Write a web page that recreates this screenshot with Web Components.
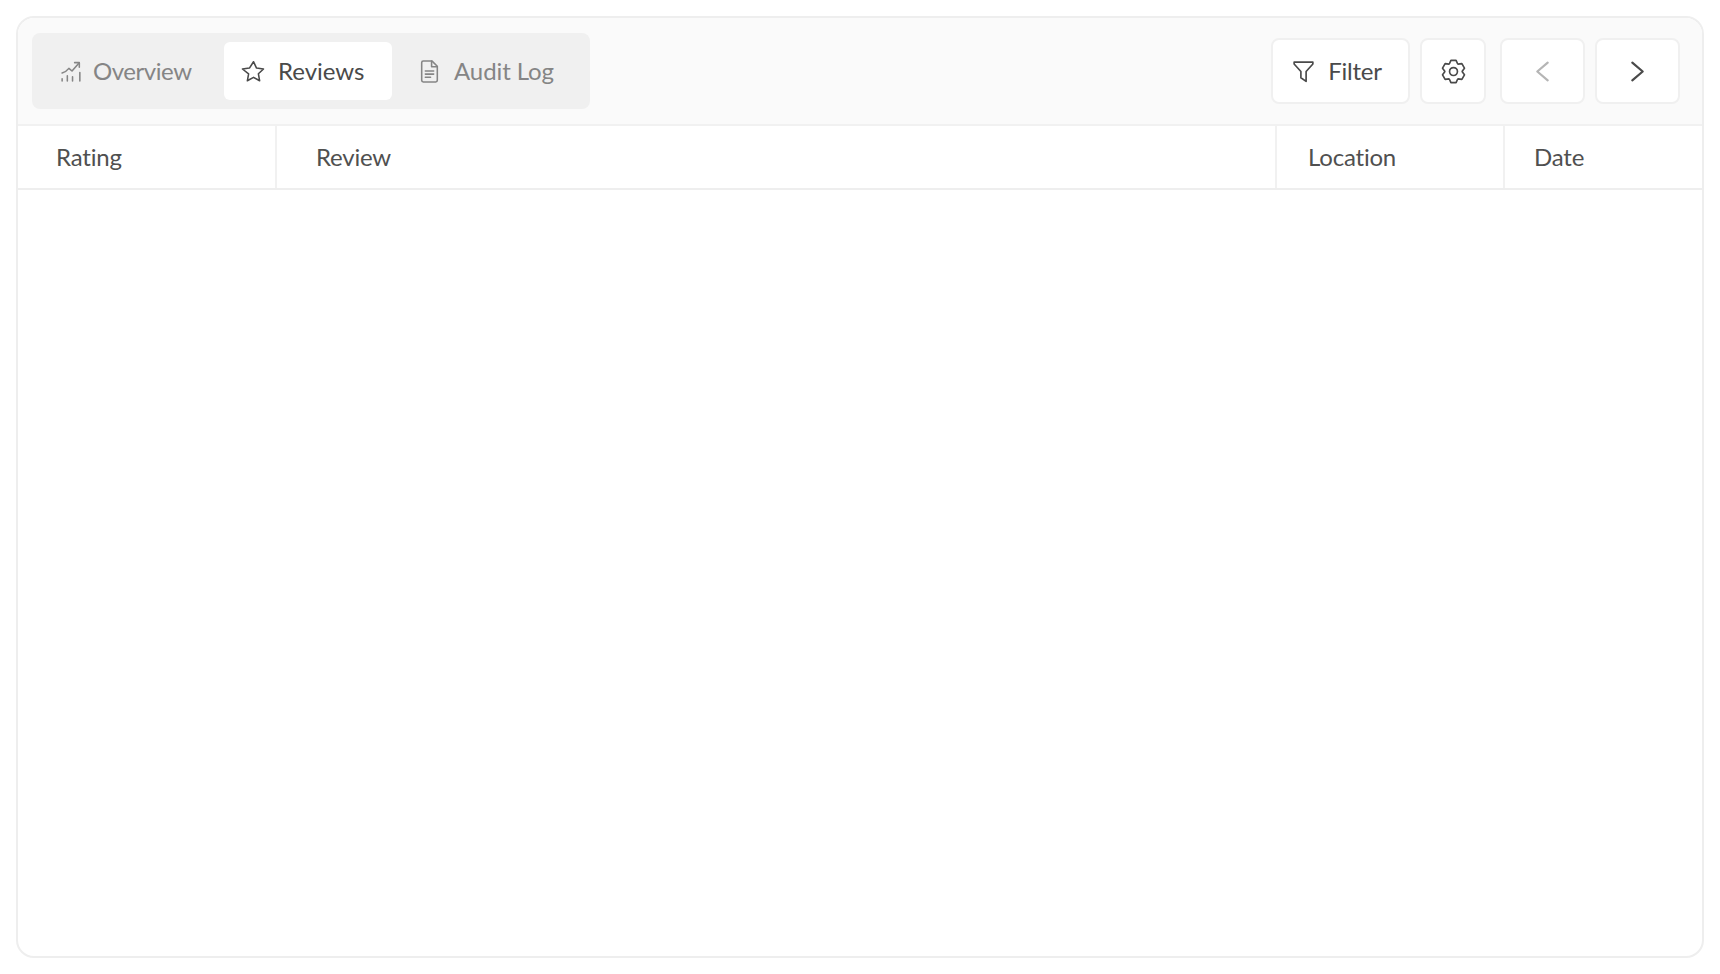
<!doctype html>
<html>
<head>
<meta charset="utf-8">
<title>Reviews</title>
<style>
  html, body { margin: 0; height: 100%; background: #fff; }
  body { padding: 16px; box-sizing: border-box; font-family: "Lato", "Open Sans", sans-serif; color: #4a4a4a; }
</style>
</head>
<body>
<review-card>
  <review-toolbar slot="toolbar">
    <tab-group slot="tabs">
      <tab-item icon="chart" style="width:181px" pad="16" gap="9" track="-.45">Overview</tab-item>
      <tab-item icon="star" style="width:168px" pad="17" gap="12" track="0" active>Reviews</tab-item>
      <tab-item icon="doc" pad="25" gap="12" track="-.1">Audit Log</tab-item>
    </tab-group>
    <tool-button slot="tools" icon="filter">Filter</tool-button>
    <tool-button slot="tools" icon="gear" square></tool-button>
    <tool-button slot="tools" icon="left" nav muted class="sep"></tool-button>
    <tool-button slot="tools" icon="right" nav></tool-button>
  </review-toolbar>
  <table-head slot="head">
    <head-cell style="width:259px" pad="38">Rating</head-cell>
    <head-cell style="width:1000px" pad="39">Review</head-cell>
    <head-cell style="width:228px" pad="31">Location</head-cell>
    <head-cell style="flex:1" pad="29" last>Date</head-cell>
  </table-head>
</review-card>

<script>
// six tooth gear outline, easier to compute than to write by hand
function gearPath() {
  const pts = [];
  for (let i = 0; i < 6; i++) {
    const a = -90 + i * 60;
    [[a - 28, 8.4], [a - 13, 11], [a + 13, 11], [a + 28, 8.4]].forEach(([deg, r]) => {
      const rad = deg * Math.PI / 180;
      pts.push((12 + r * Math.cos(rad)).toFixed(2) + " " + (12 + r * Math.sin(rad)).toFixed(2));
    });
  }
  return "M" + pts.join("L") + "z";
}

const icons = {
  chart: '<path d="M3 13.5c2.5-.8 5-2.6 6.5-4.5l3 2.5L19 4"/><path d="M15 3.5h4.500V8"/><path d="M3 21v-2M8 21v-5M13 21v-4M20 21v-8"/>',
  star: '<path d="M12 2.600l2.900 6.100 6.700.9-4.900 4.600 1.200 6.700-5.900-3.300-5.900 3.300 1.200-6.700L1.400 9.600l6.700-.9z"/>',
  doc: '<path d="M6 2h8.500l5 5v13.500a1.500 1.500 0 0 1-1.500 1.500H6a1.500 1.500 0 0 1-1.500-1.500V3.500A1.500 1.500 0 0 1 6 2z"/><path d="M14 2v5.500h5.500"/><path d="M8 11.500h8M8 14.500h8M8 17.500h5"/>',
  filter: '<path d="M3 3h18v1.800l-6.500 7.200v9.500l-5-3.500v-6L3 4.800z"/>',
  gear: '<path d="' + gearPath() + '"/><circle cx="12" cy="12" r="3.800"/>',
  left: '<path d="M17 3.500L7 12l10 8.500"/>',
  right: '<path d="M7 3.500L17 12 7 20.500"/>'
};

customElements.define("review-card", class extends HTMLElement {
  constructor() {
    super();
    this.attachShadow({ mode: "open" });
    this.shadowRoot.innerHTML = `
      <style>
        :host { display: flex; flex-direction: column; height: 100%; box-sizing: border-box;
          border: 2px solid #eeeeee; border-radius: 18px; background: #fff; overflow: hidden; }
      </style>
      <slot name="toolbar"></slot>
      <slot name="head"></slot>
    `;
  }
});

customElements.define("review-toolbar", class extends HTMLElement {
  constructor() {
    super();
    this.attachShadow({ mode: "open" });
    this.shadowRoot.innerHTML = `
      <style>
        :host { display: flex; align-items: center; justify-content: space-between; height: 108px;
          box-sizing: border-box; padding: 0 22px 0 14px; background: #fafafa; border-bottom: 2px solid #f1f1f1; }
        .tools { display: flex; align-items: center; gap: 10px; }
      </style>
      <slot name="tabs"></slot>
      <div class="tools"><slot name="tools"></slot></div>
    `;
  }
});

customElements.define("tab-group", class extends HTMLElement {
  constructor() {
    super();
    this.attachShadow({ mode: "open" });
    this.shadowRoot.innerHTML = `
      <style>
        :host { display: flex; align-items: center; width: 558px; height: 76px; box-sizing: border-box;
          padding: 0 11px; background: #f0f0f0; border-radius: 8px; }
      </style>
      <slot></slot>
    `;
  }
});

customElements.define("tab-item", class extends HTMLElement {
  constructor() {
    super();
    this.attachShadow({ mode: "open" });
    const active = this.hasAttribute("active");
    this.shadowRoot.innerHTML = `
      <style>
        :host { display: flex; align-items: center; gap: ${this.getAttribute("gap")}px; height: 58px; box-sizing: border-box;
          padding-left: ${this.getAttribute("pad")}px; padding-bottom: 2px; border-radius: 6px; font-size: 24px; letter-spacing: ${this.getAttribute("track")}px;
          color: ${active ? "#4a4a4a" : "#858585"}; background: ${active ? "#fff" : "transparent"}; }
        svg { width: 25px; height: 25px; margin-top: 2px; fill: none; stroke: currentColor; stroke-width: 1.500; stroke-linejoin: round; stroke-linecap: round; flex: none; }
      </style>
      <svg viewBox="0 0 24 24">${icons[this.getAttribute("icon")]}</svg>
      <slot></slot>
    `;
  }
});

customElements.define("tool-button", class extends HTMLElement {
  constructor() {
    super();
    this.attachShadow({ mode: "open" });
    const nav = this.hasAttribute("nav");
    const square = this.hasAttribute("square");
    const width = nav ? "85px" : square ? "66px" : "139px";
    const stroke = this.hasAttribute("muted") ? "#b5b5b5" : "#4a4a4a";
    this.shadowRoot.innerHTML = `
      <style>
        :host { display: flex; align-items: center; justify-content: center; gap: ${nav || square ? 0 : 12}px; width: ${width}; height: 66px;
          box-sizing: border-box; padding-right: ${nav || square ? 0 : 8}px; padding-bottom: 1px; border: 2px solid #f0f0f0; border-radius: 8px; background: #fff;
          font-size: 24px; letter-spacing: -.2px; color: #4a4a4a; }
        :host(.sep) { margin-left: 4px; }
        svg { width: 25px; height: 25px; margin-top: 1px; fill: none; stroke: ${stroke}; stroke-width: ${nav ? 2.100 : 1.600}; stroke-linejoin: round; stroke-linecap: round; flex: none; }
      </style>
      <svg viewBox="0 0 24 24">${icons[this.getAttribute("icon")]}</svg>
      <slot></slot>
    `;
  }
});

customElements.define("table-head", class extends HTMLElement {
  constructor() {
    super();
    this.attachShadow({ mode: "open" });
    this.shadowRoot.innerHTML = `
      <style>
        :host { display: flex; height: 64px; box-sizing: border-box; border-bottom: 2px solid #eeeeee; background: #fff; }
      </style>
      <slot></slot>
    `;
  }
});

customElements.define("head-cell", class extends HTMLElement {
  constructor() {
    super();
    this.attachShadow({ mode: "open" });
    this.shadowRoot.innerHTML = `
      <style>
        :host { display: flex; align-items: center; box-sizing: border-box; padding-left: ${this.getAttribute("pad")}px; padding-bottom: 2px;
          border-right: ${this.hasAttribute("last") ? "0" : "2px solid #f1f1f1"}; font-size: 24px; letter-spacing: -.2px; color: #505050; }
      </style>
      <slot></slot>
    `;
  }
});
</script>
</body>
</html>
